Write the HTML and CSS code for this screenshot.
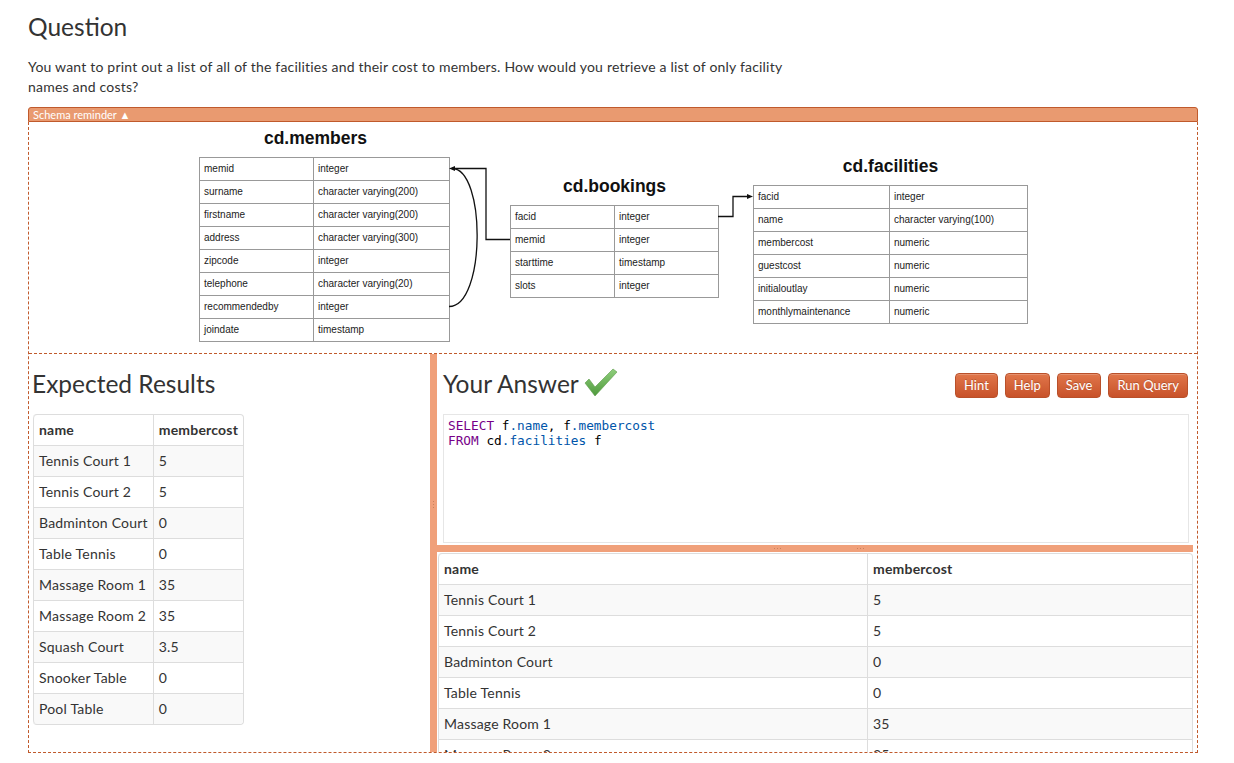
FILE: index.html
```html
<!DOCTYPE html>
<html>
<head>
<meta charset="utf-8">
<title>Question</title>
<link rel="stylesheet" href="styles.css">
</head>
<body>
<div class="page">
  <h3 class="title">Question</h3>
  <p class="question">You want to print out a list of all of the facilities and their cost to members. How would you retrieve a list of only facility names and costs?</p>
  <div class="schema-bar">Schema reminder ▲</div>
  <div class="frame">
    <div class="schema">
      <svg class="links" width="1168" height="231" viewBox="0 0 1168 231">
        <path d="M481,117.5 H457 V46.5 H425" fill="none" stroke="#111" stroke-width="1.3"/>
        <polygon points="420,46.5 426,44 426,49" fill="#111"/>
        <path d="M420,184.5 C457,184.5 457,46.5 423,46.5" fill="none" stroke="#111" stroke-width="1.3"/>
        <path d="M689,94.5 H704 V74.5 H719" fill="none" stroke="#111" stroke-width="1.3"/>
        <polygon points="724,74.5 718,72 718,77" fill="#111"/>
      </svg>
      <div class="entity members">
        <div class="entity-name">cd.members</div>
        <table class="etable">
          <tr><td>memid</td><td>integer</td></tr>
          <tr><td>surname</td><td>character varying(200)</td></tr>
          <tr><td>firstname</td><td>character varying(200)</td></tr>
          <tr><td>address</td><td>character varying(300)</td></tr>
          <tr><td>zipcode</td><td>integer</td></tr>
          <tr><td>telephone</td><td>character varying(20)</td></tr>
          <tr><td>recommendedby</td><td>integer</td></tr>
          <tr><td>joindate</td><td>timestamp</td></tr>
        </table>
      </div>
      <div class="entity bookings">
        <div class="entity-name">cd.bookings</div>
        <table class="etable">
          <tr><td>facid</td><td>integer</td></tr>
          <tr><td>memid</td><td>integer</td></tr>
          <tr><td>starttime</td><td>timestamp</td></tr>
          <tr><td>slots</td><td>integer</td></tr>
        </table>
      </div>
      <div class="entity facilities">
        <div class="entity-name">cd.facilities</div>
        <table class="etable">
          <tr><td>facid</td><td>integer</td></tr>
          <tr><td>name</td><td>character varying(100)</td></tr>
          <tr><td>membercost</td><td>numeric</td></tr>
          <tr><td>guestcost</td><td>numeric</td></tr>
          <tr><td>initialoutlay</td><td>numeric</td></tr>
          <tr><td>monthlymaintenance</td><td>numeric</td></tr>
        </table>
      </div>
    </div>
    <div class="workspace">
      <div class="expected">
        <h3>Expected Results</h3>
        <table class="results compact">
          <thead><tr><th>name</th><th>membercost</th></tr></thead>
          <tbody>
            <tr><td>Tennis Court 1</td><td>5</td></tr>
            <tr><td>Tennis Court 2</td><td>5</td></tr>
            <tr><td>Badminton Court</td><td>0</td></tr>
            <tr><td>Table Tennis</td><td>0</td></tr>
            <tr><td>Massage Room 1</td><td>35</td></tr>
            <tr><td>Massage Room 2</td><td>35</td></tr>
            <tr><td>Squash Court</td><td>3.5</td></tr>
            <tr><td>Snooker Table</td><td>0</td></tr>
            <tr><td>Pool Table</td><td>0</td></tr>
          </tbody>
        </table>
      </div>
      <div class="vsplit"><span class="grip-v"></span></div>
      <div class="answer">
        <div class="answer-top">
          <div class="answer-head">
            <h3>Your Answer
              <svg class="check" width="34" height="30" viewBox="0 0 34 30">
                <defs>
                  <linearGradient id="g" x1="0" y1="0" x2="0" y2="1">
                    <stop offset="0" stop-color="#8fce7c"/>
                    <stop offset="1" stop-color="#4f9a3c"/>
                  </linearGradient>
                </defs>
                <polygon points="1,15 5,11 11,19 29,1 33,4 11,28" fill="url(#g)" stroke="#5a9a48" stroke-width="0.6"/>
              </svg>
            </h3>
            <div class="buttons">
              <button class="btn">Hint</button>
              <button class="btn">Help</button>
              <button class="btn">Save</button>
              <button class="btn">Run Query</button>
            </div>
          </div>
          <div class="editor"><pre class="code"><span class="kw">SELECT</span> f<span class="prop">.name</span>, f<span class="prop">.membercost</span>
<span class="kw">FROM</span> cd<span class="prop">.facilities</span> f</pre></div>
        </div>
        <div class="hsplit"><span class="grip-h"></span><span class="grip-h"></span></div>
        <div class="answer-results">
          <table class="results wide">
            <thead><tr><th>name</th><th>membercost</th></tr></thead>
            <tbody>
              <tr><td>Tennis Court 1</td><td>5</td></tr>
              <tr><td>Tennis Court 2</td><td>5</td></tr>
              <tr><td>Badminton Court</td><td>0</td></tr>
              <tr><td>Table Tennis</td><td>0</td></tr>
              <tr><td>Massage Room 1</td><td>35</td></tr>
              <tr><td>Massage Room 2</td><td>35</td></tr>
              <tr><td>Squash Court</td><td>3.5</td></tr>
            </tbody>
          </table>
        </div>
      </div>
    </div>
  </div>
</div>
</body>
</html>
```

FILE: styles.css
```css
html, body {
  margin: 0;
  padding: 0;
  background: #fff;
}

body {
  font-family: "Lato", "Open Sans", sans-serif;
  font-size: 14px;
  line-height: 20px;
  letter-spacing: 0.2px;
  color: #333;
}

.page {
  width: 1170px;
  margin-left: 28px;
  padding-top: 7px;
}

h3 {
  font-size: 24.5px;
  line-height: 40px;
  font-weight: normal;
  letter-spacing: 0;
  margin: 0 0 10px;
  color: #333;
}

.question {
  max-width: 780px;
  margin: 0 0 10px;
}

.schema-bar {
  height: 13px;
  line-height: 13px;
  font-size: 11px;
  letter-spacing: 0;
  color: #fff;
  background: #e99a70;
  border: 1px solid #c05a2c;
  border-radius: 3px 3px 0 0;
  padding-left: 4px;
}

.frame {
  border: 1px dashed #c05a2c;
  border-top: none;
}

.schema {
  position: relative;
  height: 232px;
  border-bottom: 1px dashed #c05a2c;
  display: flex;
  align-items: flex-start;
  padding-left: 170px;
  box-sizing: border-box;
  font-family: "Liberation Sans", Arial, sans-serif;
  letter-spacing: 0;
}

.links {
  position: absolute;
  left: 0;
  top: 0;
}

.entity-name {
  font-weight: bold;
  font-size: 17.5px;
  line-height: 20px;
  text-align: center;
  color: #111;
  margin-bottom: 9px;
}

.members { margin-top: 6px; }
.members .entity-name { padding-right: 18px; }
.bookings { margin-top: 54px; margin-left: 60px; }
.facilities { margin-top: 34px; margin-left: 34px; }

.etable {
  border-collapse: collapse;
  font-size: 10px;
  color: #222;
}

.etable td {
  border: 1px solid #999;
  height: 23px;
  padding: 0 0 0 4px;
  box-sizing: border-box;
  line-height: 12px;
  white-space: nowrap;
}

.members .etable td:first-child { width: 114px; }
.members .etable td:last-child { width: 136px; }
.bookings .etable td { width: 104px; }
.facilities .etable td:first-child { width: 136px; }
.facilities .etable td:last-child { width: 138px; }

.workspace {
  display: flex;
  height: 398px;
  overflow: hidden;
}

.expected {
  width: 401px;
  padding-left: 3px;
  box-sizing: border-box;
}

.expected h3 {
  margin: 10px 0;
}

.results {
  border-collapse: separate;
  border-spacing: 0;
  border: 1px solid #ddd;
  border-left: 0;
  border-radius: 4px;
}

.results th,
.results td {
  padding: 5px;
  line-height: 20px;
  text-align: left;
  border-left: 1px solid #ddd;
  border-top: 1px solid #ddd;
  vertical-align: top;
  white-space: nowrap;
}

.results thead th {
  border-top: 0;
  font-weight: bold;
}

.results thead th:first-child { border-top-left-radius: 4px; }
.results thead th:last-child { border-top-right-radius: 4px; }
.results tbody tr:last-child td:first-child { border-bottom-left-radius: 4px; }
.results tbody tr:last-child td:last-child { border-bottom-right-radius: 4px; }

.results tbody tr:nth-child(odd) td {
  background: #f9f9f9;
}

.compact {
  margin-left: 1px;
}

.compact th:first-child { width: 108px; }
.compact th:last-child { width: 79px; }

.vsplit {
  width: 7px;
  flex: none;
  background: #f0a07a;
  position: relative;
}

.grip-v {
  position: absolute;
  left: 3px;
  top: 146px;
  width: 1px;
  height: 9px;
  background: repeating-linear-gradient(#f0a07a 0 1px, #c9815c 1px 2px, #f0a07a 2px 3px);
}

.answer {
  width: 756px;
  flex: none;
  display: flex;
  flex-direction: column;
}

.answer-top {
  height: 191px;
  padding: 0 4px 0 6px;
  box-sizing: border-box;
}

.answer-head {
  display: flex;
  align-items: center;
  justify-content: space-between;
  margin: 10px 0;
  height: 40px;
}

.answer-head h3 {
  margin: 0;
  display: flex;
  align-items: center;
}

.check {
  margin-left: 5px;
  margin-top: -2px;
}

.buttons {
  display: flex;
  gap: 7px;
  margin-right: 1px;
  margin-top: 2px;
}

.btn {
  font-family: inherit;
  font-size: 13px;
  line-height: 19px;
  letter-spacing: 0;
  padding: 2px 8px;
  color: #fff;
  text-shadow: 0 -1px 0 rgba(0, 0, 0, 0.2);
  background: linear-gradient(#e0764a, #c8522a);
  border: 1px solid #b9502a;
  border-radius: 4px;
  box-shadow: inset 0 1px 0 rgba(255, 255, 255, 0.2);
  cursor: pointer;
}

.editor {
  height: 129px;
  border: 1px solid #e6e6e6;
  box-sizing: border-box;
  padding: 3px 4px;
}

.code {
  margin: 0;
  font-family: "DejaVu Sans Mono", "Liberation Mono", monospace;
  font-size: 12.75px;
  line-height: 15px;
  letter-spacing: 0;
  color: #000;
}

.kw { color: #708; }
.prop { color: #05a; }

.hsplit {
  height: 7px;
  margin: 2px 0 1px;
  flex: none;
  background: #f0a07a;
  position: relative;
}

.grip-h {
  position: absolute;
  top: 3px;
  width: 9px;
  height: 1px;
  background: repeating-linear-gradient(90deg, #f0a07a 0 1px, #c9815c 1px 2px, #f0a07a 2px 3px);
}

.grip-h:first-child { left: 336px; }
.grip-h:last-child { left: 419px; }

.answer-results {
  padding-left: 1px;
}

.wide {
  width: 100%;
}

.wide th:first-child { width: 418px; }
```
